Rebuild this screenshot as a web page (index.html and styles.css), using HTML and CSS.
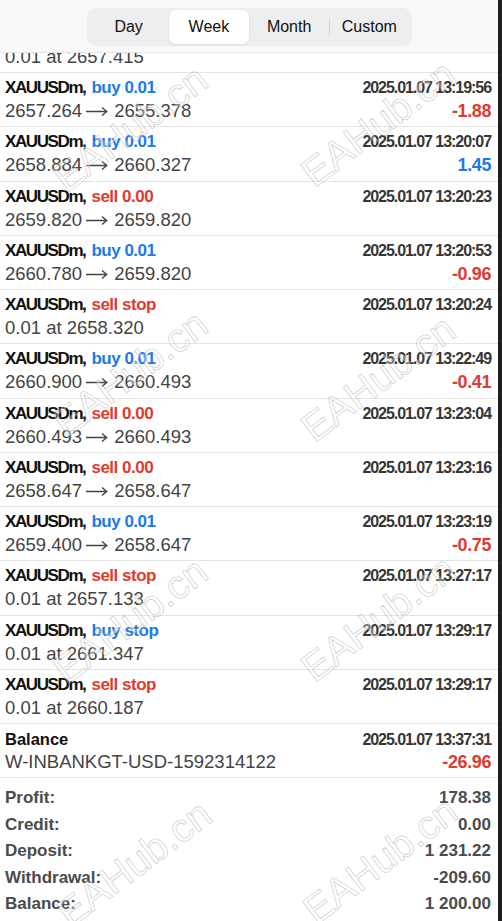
FILE: index.html
```html
<!DOCTYPE html>
<html lang="en">
<head>
    <meta charset="UTF-8">
    <meta name="viewport" content="width=device-width, initial-scale=1.0">
    <title>History</title>
    <link rel="stylesheet" href="styles.css">
</head>
<body>
<svg width="0" height="0" class="defs">
    <symbol id="arrow" viewBox="0 0 22 10">
        <path d="M0 5.5H20.5M16 1.5L20.8 5.5L16 9.5" fill="none" stroke="currentColor" stroke-width="1.3"/>
    </symbol>
</svg>
<div class="screen">
    <header class="topbar">
        <nav class="segments">
            <button class="seg">Day</button>
            <button class="seg active">Week</button>
            <button class="seg">Month</button>
            <button class="seg split">Custom</button>
        </nav>
    </header>

    <main class="scroll">
        <ul class="deals">
            <!-- row scrolled half under the header -->
            <li class="deal partial">
                <div class="line sub"><span>0.01 at 2657.415</span></div>
            </li>
            <li class="deal">
                <div class="line"><span class="sym">XAUUSDm,</span><span class="side buy">buy 0.01</span><span class="time">2025.01.07 13:19:56</span></div>
                <div class="line sub"><span>2657.264<svg class="arrow"><use href="#arrow"/></svg>2655.378</span><span class="pl loss">-1.88</span></div>
            </li>
            <li class="deal">
                <div class="line"><span class="sym">XAUUSDm,</span><span class="side buy">buy 0.01</span><span class="time">2025.01.07 13:20:07</span></div>
                <div class="line sub"><span>2658.884<svg class="arrow"><use href="#arrow"/></svg>2660.327</span><span class="pl gain">1.45</span></div>
            </li>
            <li class="deal">
                <div class="line"><span class="sym">XAUUSDm,</span><span class="side sell">sell 0.00</span><span class="time">2025.01.07 13:20:23</span></div>
                <div class="line sub"><span>2659.820<svg class="arrow"><use href="#arrow"/></svg>2659.820</span></div>
            </li>
            <li class="deal">
                <div class="line"><span class="sym">XAUUSDm,</span><span class="side buy">buy 0.01</span><span class="time">2025.01.07 13:20:53</span></div>
                <div class="line sub"><span>2660.780<svg class="arrow"><use href="#arrow"/></svg>2659.820</span><span class="pl loss">-0.96</span></div>
            </li>
            <li class="deal">
                <div class="line"><span class="sym">XAUUSDm,</span><span class="side sell">sell stop</span><span class="time">2025.01.07 13:20:24</span></div>
                <div class="line sub"><span>0.01 at 2658.320</span></div>
            </li>
            <li class="deal">
                <div class="line"><span class="sym">XAUUSDm,</span><span class="side buy">buy 0.01</span><span class="time">2025.01.07 13:22:49</span></div>
                <div class="line sub"><span>2660.900<svg class="arrow"><use href="#arrow"/></svg>2660.493</span><span class="pl loss">-0.41</span></div>
            </li>
            <li class="deal">
                <div class="line"><span class="sym">XAUUSDm,</span><span class="side sell">sell 0.00</span><span class="time">2025.01.07 13:23:04</span></div>
                <div class="line sub"><span>2660.493<svg class="arrow"><use href="#arrow"/></svg>2660.493</span></div>
            </li>
            <li class="deal">
                <div class="line"><span class="sym">XAUUSDm,</span><span class="side sell">sell 0.00</span><span class="time">2025.01.07 13:23:16</span></div>
                <div class="line sub"><span>2658.647<svg class="arrow"><use href="#arrow"/></svg>2658.647</span></div>
            </li>
            <li class="deal">
                <div class="line"><span class="sym">XAUUSDm,</span><span class="side buy">buy 0.01</span><span class="time">2025.01.07 13:23:19</span></div>
                <div class="line sub"><span>2659.400<svg class="arrow"><use href="#arrow"/></svg>2658.647</span><span class="pl loss">-0.75</span></div>
            </li>
            <li class="deal">
                <div class="line"><span class="sym">XAUUSDm,</span><span class="side sell">sell stop</span><span class="time">2025.01.07 13:27:17</span></div>
                <div class="line sub"><span>0.01 at 2657.133</span></div>
            </li>
            <li class="deal">
                <div class="line"><span class="sym">XAUUSDm,</span><span class="side buy">buy stop</span><span class="time">2025.01.07 13:29:17</span></div>
                <div class="line sub"><span>0.01 at 2661.347</span></div>
            </li>
            <li class="deal">
                <div class="line"><span class="sym">XAUUSDm,</span><span class="side sell">sell stop</span><span class="time">2025.01.07 13:29:17</span></div>
                <div class="line sub"><span>0.01 at 2660.187</span></div>
            </li>
            <li class="deal">
                <div class="line"><span class="title">Balance</span><span class="time">2025.01.07 13:37:31</span></div>
                <div class="line sub"><span>W-INBANKGT-USD-1592314122</span><span class="pl loss">-26.96</span></div>
            </li>
        </ul>

        <dl class="totals">
            <div class="total"><dt>Profit:</dt><dd>178.38</dd></div>
            <div class="total"><dt>Credit:</dt><dd>0.00</dd></div>
            <div class="total"><dt>Deposit:</dt><dd>1 231.22</dd></div>
            <div class="total"><dt>Withdrawal:</dt><dd>-209.60</dd></div>
            <div class="total"><dt>Balance:</dt><dd>1 200.00</dd></div>
        </dl>
    </main>

    <!-- watermark stamps over the screenshot -->
    <span class="mark" style="left: 40px; top: 108px;">EAHub.cn</span>
    <span class="mark" style="left: 288px; top: 103px;">EAHub.cn</span>
    <span class="mark" style="left: 40px; top: 353px;">EAHub.cn</span>
    <span class="mark" style="left: 288px; top: 358px;">EAHub.cn</span>
    <span class="mark" style="left: 40px; top: 600px;">EAHub.cn</span>
    <span class="mark" style="left: 288px; top: 598px;">EAHub.cn</span>
    <span class="mark" style="left: 44px; top: 843px;">EAHub.cn</span>
    <span class="mark" style="left: 290px; top: 840px;">EAHub.cn</span>
</div>
</body>
</html>
```

FILE: styles.css
```css
:root {
    --ink: #111;
    --grey: #444;
    --date: #363636;
    --blue: #1b7ce4;
    --red: #e03a31;
    --rule: #e4e4e4;
}
html, body {
    margin: 0;
    height: 100%;
    overflow: hidden;
}
body {
    background: #1e1e1e;
    font-family: 'Liberation Sans', Arial, sans-serif;
}
.defs {
    position: absolute;
}
.screen {
    position: relative;
    width: 498px;
    height: 921px;
    background: #fff;
    display: flex;
    flex-direction: column;
    overflow: hidden;
}
.topbar {
    flex: none;
    height: 53px;
    box-sizing: border-box;
    padding-top: 8px;
    background: #faf8fa;
    border-bottom: 1px solid #e6e4e7;
    display: flex;
    justify-content: center;
}
.segments {
    display: flex;
    width: 325px;
    height: 38px;
    padding: 2px;
    box-sizing: border-box;
    background: #eeedf0;
    border-radius: 9px;
}
.seg {
    flex: 1;
    border: none;
    background: none;
    font-family: inherit;
    font-size: 16px;
    line-height: 20px;
    color: var(--ink);
    border-radius: 7px;
    padding: 0;
    position: relative;
}
.seg.active {
    background: #fff;
    box-shadow: 0 1px 3px rgba(0,0,0,0.08);
}
.seg.split::before {
    content: "";
    position: absolute;
    left: 0;
    top: 9px;
    bottom: 9px;
    width: 1px;
    background: #d2d0d4;
}
.scroll {
    flex: 1;
    overflow: hidden;
}
.deals {
    list-style: none;
    margin: -8.25px 0 0 0;
    padding: 0;
}
.deal {
    padding: 4px 7px 3.25px 5px;
    border-bottom: 1px solid var(--rule);
}
.deal.partial {
    padding-top: 0;
}
.line {
    display: flex;
    align-items: baseline;
    height: 22px;
    line-height: 22px;
    font-size: 17px;
    font-weight: bold;
    white-space: nowrap;
}
.line.sub {
    height: 24px;
    line-height: 24px;
    font-size: 18.5px;
    font-weight: normal;
    color: var(--grey);
}
.arrow {
    width: 22px;
    height: 10px;
    margin: 0 6px 0 4px;
    vertical-align: 1px;
}
.sym {
    color: var(--ink);
    letter-spacing: -1.4px;
}
.title {
    color: var(--ink);
    font-size: 16.5px;
}
.side {
    margin-left: 6px;
    letter-spacing: -0.5px;
}
.buy { color: var(--blue); }
.sell { color: var(--red); }
.time {
    margin-left: auto;
    font-size: 16px;
    color: var(--date);
    letter-spacing: -1.05px;
}
.pl {
    margin-left: auto;
    font-size: 18px;
    font-weight: bold;
    letter-spacing: -0.4px;
}
.loss { color: var(--red); }
.gain { color: var(--blue); }
.totals {
    margin: 0;
    padding: 7px 7px 0 5px;
}
.total {
    display: flex;
    justify-content: space-between;
    height: 26.5px;
    line-height: 26.5px;
    font-size: 17px;
    font-weight: bold;
    color: #4b4b4b;
}
.total dt, .total dd {
    margin: 0;
}
.mark {
    position: absolute;
    font-size: 40px;
    line-height: 1;
    color: rgba(255,255,255,0.35);
    -webkit-text-stroke: 0.8px rgba(150,150,150,0.45);
    transform: rotate(-37deg);
    white-space: nowrap;
    pointer-events: none;
}
```
